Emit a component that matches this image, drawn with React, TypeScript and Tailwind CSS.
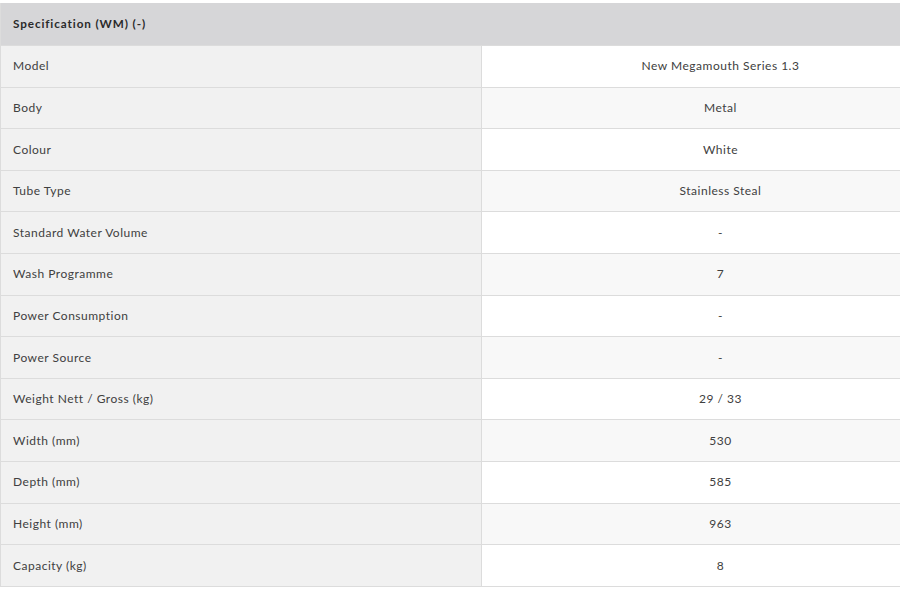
const rows: [string, string][] = [
  ['Model', 'New Megamouth Series 1.3'],
  ['Body', 'Metal'],
  ['Colour', 'White'],
  ['Tube Type', 'Stainless Steal'],
  ['Standard Water Volume', '-'],
  ['Wash Programme', '7'],
  ['Power Consumption', '-'],
  ['Power Source', '-'],
  ['Weight Nett / Gross (kg)', '29 / 33'],
  ['Width (mm)', '530'],
  ['Depth (mm)', '585'],
  ['Height (mm)', '963'],
  ['Capacity (kg)', '8'],
];

export default function App() {
  return (
    <div className="w-[900px] h-[591px] overflow-hidden bg-white pt-[3px] font-['Lato',sans-serif] text-[12px] tracking-[0.5px] text-[#404040]">
      <div className="w-[959px] border-l border-b border-[#dcdcdc]">
        {/* header */}
        <div className="h-[42px] bg-[#d6d6d8] flex items-center pl-[12px] font-bold text-[11.7px] tracking-[0.9px] text-[#2a2a2a]">
          Specification (WM) (-)
        </div>

        {rows.map(([label, value], i) => (
          <div key={label} className="flex h-[41.62px] border-t border-[#dcdcdc]">
            <div className="w-[481px] shrink-0 bg-[#f1f1f1] border-r border-[#dcdcdc] flex items-center pl-[12px]">
              {label}
            </div>
            <div
              className={
                'flex-1 flex items-center justify-center ' +
                (i % 2 === 1 ? 'bg-[#f8f8f8]' : 'bg-white')
              }
            >
              {value}
            </div>
          </div>
        ))}
      </div>
    </div>
  );
}
